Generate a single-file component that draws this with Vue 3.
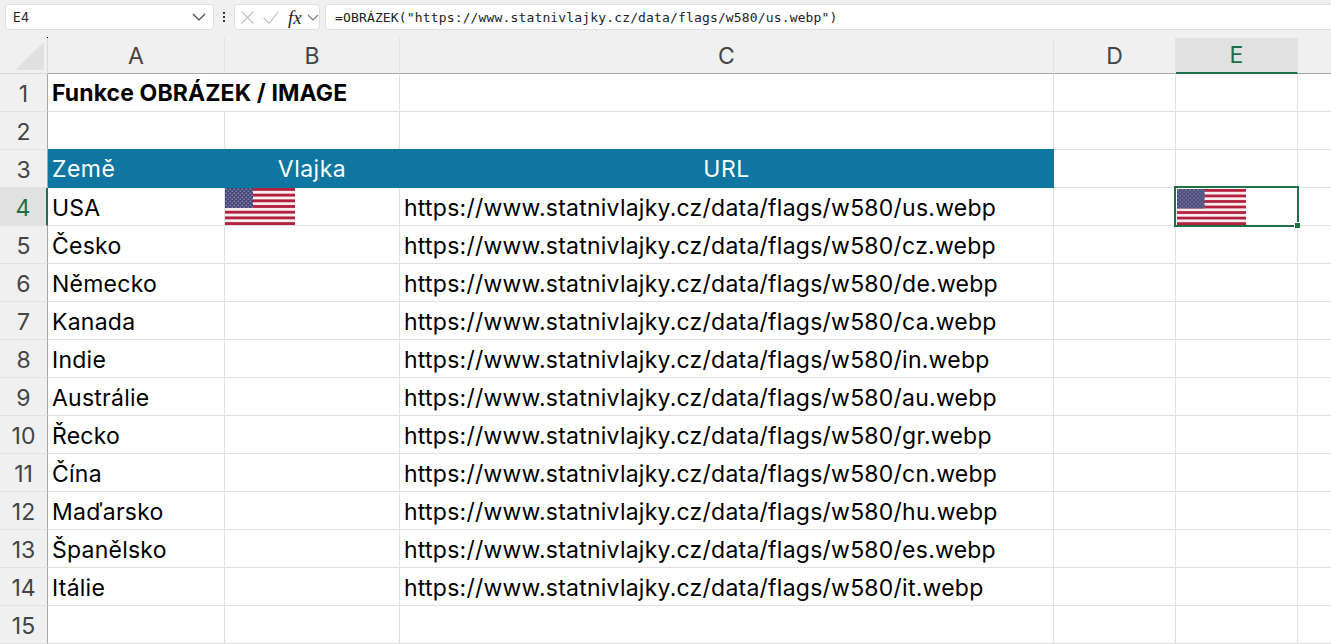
<template>
  <div class="app">
    <div class="formula-bar">
      <div class="name-box">
        <span>E4</span>
        <svg class="chev" viewBox="0 0 14 8" width="14" height="8"><path d="M1 1l6 6 6-6" fill="none" stroke="#444" stroke-width="1.2" /></svg>
      </div>
      <div class="kebab"><i></i><i></i><i></i></div>
      <div class="fx-box">
        <svg viewBox="0 0 13 13" width="13" height="13"><path d="M.5.5l12 12M12.5.5l-12 12" stroke="#c2c2c2" stroke-width="1.2" fill="none" /></svg>
        <svg viewBox="0 0 16 13" width="16" height="13"><path d="M.5 6.5l5.5 6 9.5-12" stroke="#c2c2c2" stroke-width="1.2" fill="none" /></svg>
        <span class="fx">fx</span>
        <svg class="chev-small" viewBox="0 0 12 7" width="12" height="7"><path d="M1 1l5 5 5-5" fill="none" stroke="#777" stroke-width="1.1" /></svg>
      </div>
      <div class="formula-input">=OBRÁZEK("https://www.statnivlajky.cz/data/flags/w580/us.webp")</div>
    </div>

    <div class="sheet">
      <div class="corner"><div class="triangle"></div><div class="dot"></div></div>
      <div
        v-for="c in columns"
        :key="c"
        class="col-head"
        :class="{ selected: c === 'E' }"
      >{{ c }}</div>
      <div class="col-head last"></div>

      <template v-for="(row, i) in rows" :key="i">
        <div class="row-head" :class="{ selected: i === 3 }">{{ i + 1 }}</div>
        <div
          v-for="(val, j) in row"
          :key="j"
          class="cell"
          :class="cellClass(i, j)"
        >
          <template v-if="val === '#flag'">
            <svg class="flag" viewBox="0 0 70 37" preserveAspectRatio="none">
              <defs>
                <pattern :id="`stars${j}`" width="4" height="4" patternUnits="userSpaceOnUse">
                  <rect width="4" height="4" fill="#444476" />
                  <rect x="0.5" y="0.5" width="1.6" height="1.6" fill="#8686ad" />
                  <rect x="2.5" y="2.5" width="1.6" height="1.6" fill="#8686ad" />
                </pattern>
              </defs>
              <rect width="70" height="37" fill="#f8eef0" />
              <rect v-for="s in 7" :key="s" x="0" :y="(s - 1) * 5.69" width="70" height="2.85" fill="#b3213e" />
              <rect width="28" height="20" :fill="`url(#stars${j})`" />
            </svg>
          </template>
          <template v-else>{{ val }}</template>
          <div v-if="i === 3 && j === 4" class="selection"><div class="handle"></div></div>
        </div>
      </template>
    </div>
  </div>
</template>

<script setup>
const columns = ['A', 'B', 'C', 'D', 'E']

const base = 'https://www.statnivlajky.cz/data/flags/w580/'
const countries = [
  ['USA', 'us'],
  ['Česko', 'cz'],
  ['Německo', 'de'],
  ['Kanada', 'ca'],
  ['Indie', 'in'],
  ['Austrálie', 'au'],
  ['Řecko', 'gr'],
  ['Čína', 'cn'],
  ['Maďarsko', 'hu'],
  ['Španělsko', 'es'],
  ['Itálie', 'it']
]

const rows = [
  ['Funkce OBRÁZEK / IMAGE', '', '', '', '', ''],
  ['', '', '', '', '', ''],
  ['Země', 'Vlajka', 'URL', '', '', ''],
  ...countries.map(([name, code], i) => [
    name,
    i === 0 ? '#flag' : '',
    `${base}${code}.webp`,
    '',
    i === 0 ? '#flag' : '',
    ''
  ]),
  ['', '', '', '', '', '']
]

const cellClass = (i, j) => ({
  title: i === 0 && j === 0,
  band: i === 2 && j < 3,
  center: i === 2 && j > 0 && j < 3,
  'has-flag': rows[i][j] === '#flag',
  'sel-cell': i === 3 && j === 4
})
</script>

<style>
html,
body {
  margin: 0;
  background: #fff;
  overflow: hidden;
}
</style>

<style scoped>
.app {
  width: 1331px;
  height: 644px;
  overflow: hidden;
  font-family: Inter, "Noto Sans", sans-serif;
  background: #fff;
}

.formula-bar {
  height: 38px;
  box-sizing: border-box;
  padding: 4px 0 0 5px;
  display: flex;
  align-items: flex-start;
  background: #f0f0f0;
}

.name-box,
.fx-box,
.formula-input {
  height: 26px;
  box-sizing: border-box;
  background: #fff;
  border: 1px solid #e0e0e0;
  border-radius: 4px;
  display: flex;
  align-items: center;
}

.name-box {
  width: 209px;
  padding: 0 7px;
  justify-content: space-between;
  font-size: 13px;
  color: #222;
}

.kebab {
  width: 20px;
  height: 26px;
  display: flex;
  flex-direction: column;
  align-items: center;
  justify-content: center;
  gap: 2px;
}

.kebab i {
  width: 2px;
  height: 2px;
  background: #333;
}

.fx-box {
  width: 86px;
  padding-left: 6px;
  margin-right: 5px;
}

.fx-box svg:nth-child(2) {
  margin-left: 9px;
}

.fx {
  font-family: "Liberation Serif", serif;
  font-style: italic;
  font-size: 19px;
  line-height: 1;
  color: #222;
  margin-left: 9px;
}

.chev-small {
  margin-left: 5px;
}

.formula-input {
  flex: 1;
  padding-left: 9px;
  margin-right: -10px;
  font-family: "DejaVu Sans Mono", monospace;
  font-size: 13px;
  letter-spacing: 0.15px;
  color: #222;
  white-space: pre;
}

.sheet {
  display: grid;
  grid-template-columns: 48px 177px 175px 654px 122px 122px 34px;
  grid-template-rows: 36px repeat(15, 38px);
  background: #fff;
}

.corner {
  background: #f0f0f0;
  border-right: 1px solid #dadada;
  border-bottom: 1px solid #dadada;
  position: relative;
}

.triangle {
  position: absolute;
  left: 15px;
  top: 4px;
  width: 29px;
  height: 28px;
  background: #e0e0e0;
  clip-path: polygon(100% 0, 100% 100%, 0 100%);
}

.dot {
  position: absolute;
  left: 47px;
  top: -1px;
  width: 1px;
  height: 1px;
  background: #000;
}

.col-head {
  background: #f0f0f0;
  border-right: 1px solid #e2e2e2;
  border-bottom: 1px solid #a6a6a6;
  display: flex;
  align-items: center;
  justify-content: center;
  font-size: 23px;
  color: #444;
}

.col-head.last {
  border-right: 0;
}

.col-head.selected {
  background: #e1e1e1;
  color: #1f6e43;
  border-bottom: 2px solid #1f7246;
}

.row-head {
  background: #f0f0f0;
  border-right: 1px solid #a6a6a6;
  border-bottom: 1px solid #e2e2e2;
  padding-top: 2px;
  display: flex;
  align-items: center;
  justify-content: center;
  font-size: 23px;
  color: #444;
}

.row-head.selected {
  background: #e1e1e1;
  color: #1f6e43;
  border-right: 2px solid #1f7246;
}

.cell {
  position: relative;
  border-right: 1px solid #e0e0e0;
  border-bottom: 1px solid #e0e0e0;
  padding: 2px 0 0 4px;
  display: flex;
  align-items: center;
  font-size: 23px;
  letter-spacing: 0.24px;
  color: #000;
  white-space: nowrap;
  min-width: 0;
}

.title {
  padding-top: 0;
  font-weight: 700;
  letter-spacing: 0.1px;
  border-right: 0;
}

.band {
  padding-top: 0;
  background: #0e76a0;
  color: #fff;
  letter-spacing: 0.5px;
  border-right-color: #0e76a0;
  border-bottom-color: #0e76a0;
  box-shadow: 0 -1px 0 #0e76a0;
}

.center {
  justify-content: center;
  padding-left: 0;
}

.has-flag {
  padding: 0;
  align-items: flex-start;
}

.sel-cell {
  padding-left: 1px;
}

.flag {
  display: block;
  width: 70px;
  height: 37px;
}

.sel-cell .flag {
  width: 69px;
  height: 36px;
  margin-top: 1px;
}

.selection {
  position: absolute;
  left: -2px;
  top: -2px;
  width: 125px;
  height: 41px;
  box-sizing: border-box;
  border: 2px solid #1f7246;
  z-index: 2;
}

.handle {
  position: absolute;
  right: -3px;
  bottom: -3px;
  width: 5px;
  height: 5px;
  background: #1f7246;
  border: 1px solid #fff;
  border-width: 1px 0 0 1px;
}
</style>
